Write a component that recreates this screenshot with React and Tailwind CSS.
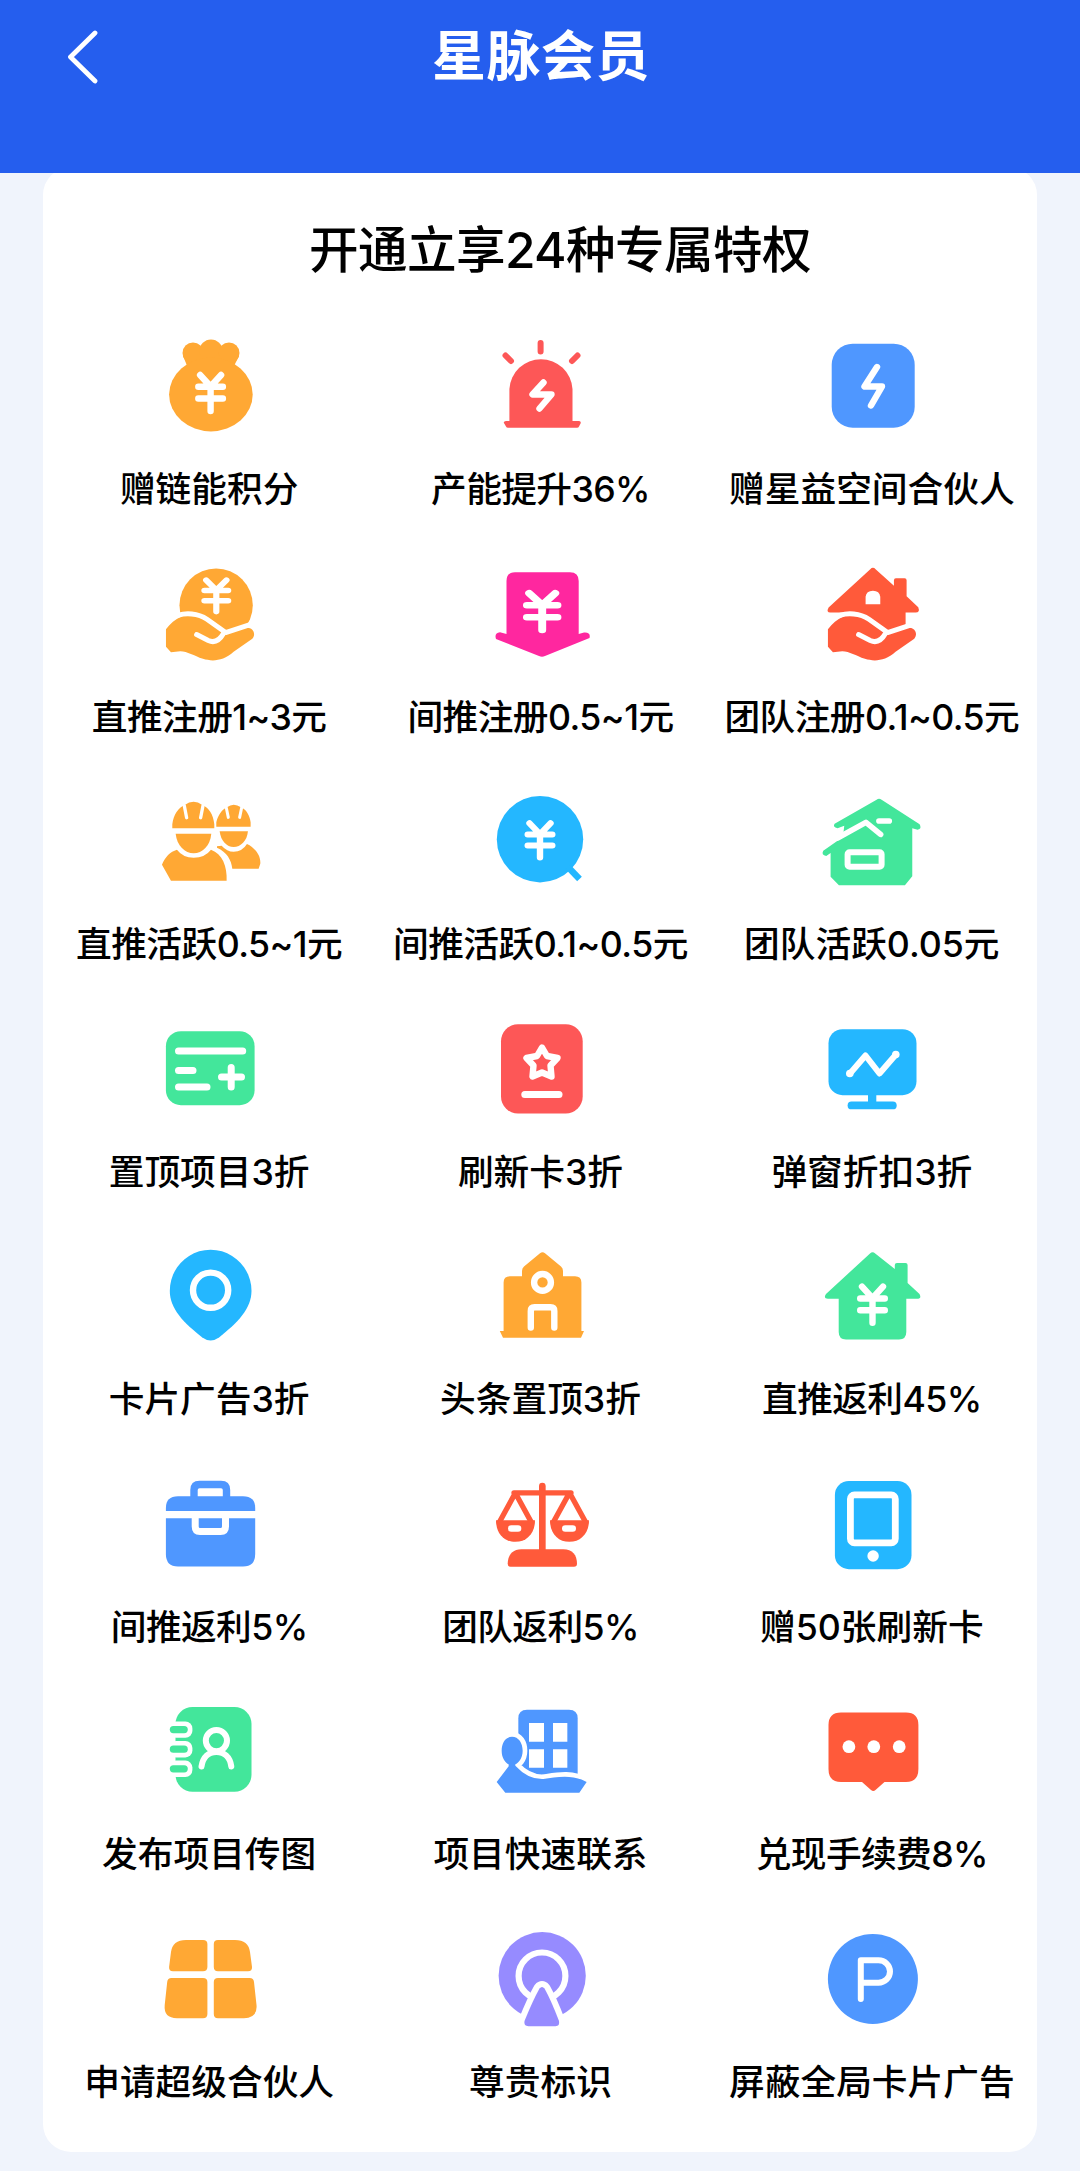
import { clsx } from 'clsx';

const ORANGE = '#ffa834';
const RED = '#fd5757';
const BLUE = '#4f97ff';
const PINK = '#ff279f';
const VERMILION = '#ff5a3a';
const GREEN = '#43e69b';
const SKY = '#24b7ff';
const PURPLE = '#968bff';

function Icon({ color, viewBox = '0 0 100 100', children }) {
  return (
    <svg width="100" height="100" viewBox={viewBox} fill={color} className="block overflow-visible">
      {children}
    </svg>
  );
}

// White rounded strokes cut into the filled shapes.
function Line({ d, w = 6.4 }) {
  return <path d={d} fill="none" stroke="#fff" strokeWidth={w} strokeLinecap="round" strokeLinejoin="round" />;
}

function Yen({ x, y, sx = 1, sy = 1 }) {
  return (
    <g transform={`translate(${x} ${y}) scale(${sx} ${sy})`}>
      <Line d="M-10.5 3L0 14.5L10.5 3M-12.3 14.8H12.3M-12.3 26.5H12.3M0 14.5V39" />
    </g>
  );
}

function Hand() {
  return (
    <>
      <path d="M47 207C60 190 75 178 92 170C110 160 145 158 168 176L228 217L288 203C304 200 320 218 306 236L250 275C218 304 185 304 158 296C130 286 112 274 90 273L62 276L47 260Z" />
      <Line w={15} d="M85 165C105 158 142 158 170 177L226 217L306 191" />
      <Line w={15} d="M139 223L174 241C192 249 208 240 220 219" />
    </>
  );
}

const MoneyBag = () => (
  <Icon color={ORANGE}>
    <circle cx="34" cy="17" r="10.5" />
    <circle cx="52" cy="15" r="11.5" />
    <circle cx="70" cy="17" r="10.5" />
    <path d="M24 20H80L74 32H29Z" />
    <ellipse cx="51.9" cy="58.5" rx="41.8" ry="36.9" />
    <Yen x={51.6} y={36} />
  </Icon>
);

const Siren = () => (
  <Icon color={RED}>
    <path d="M19.4 86V53A31.6 31.6 0 0 1 82.5 53V86Z" />
    <path d="M13.7 86.5Q14 85 16 85H89Q91 85 90.8 87L89 90.5Q88.5 91.7 87 91.7H18Q16.5 91.7 16 90.5Z" />
    <path d="M50.6 7V15.5M15.5 19.5L21 25M87.500 19.5L82 25" stroke={RED} strokeWidth="6" strokeLinecap="round" />
    <Line d="M53.5 46.500L42.500 58.5H61.5L49.5 72.5" />
  </Icon>
);

const Bolt = () => (
  <Icon color={BLUE}>
    <rect x="10.7" y="7.7" width="83" height="84" rx="21" />
    <Line d="M56 31L43.500 50.5H61L50 69.500" />
  </Icon>
);

const HandCoin = () => (
  <Icon color={ORANGE} viewBox="26.1 11.4 300 300">
    <circle cx="197.5" cy="135" r="110" />
    <Yen x={198} y={52} sx={2.9} sy={2.62} />
    <Hand />
  </Icon>
);

const PayDown = () => (
  <Icon color={PINK}>
    <path d="M16.5 50V17Q16.5 8.2 25 8.2H80Q88.7 8.2 88.7 17V70L94 68.5Q101 68 99.5 74L55 92Q52 93.5 49 92L6 75Q4 69 10 68.3L16.5 70Z" />
    <Yen x={52.2} y={26.2} sx={1.24} sy={1.02} />
  </Icon>
);

const HandHouse = () => (
  <Icon color={VERMILION} viewBox="34.2 11.4 300 300">
    <path d="M182 27Q190 19 198 27L253 77V60Q253 54 259 54H285Q291 54 291 60V108L326 141Q332 157 318 157H288V204L228 217L168 176L130 157H62Q49 157 57 142Z" />
    <path d="M168 132V110Q170 92 190 92T212 110V132Z" fill="#fff" />
    <g transform="translate(8 0)">
      <Hand />
    </g>
  </Icon>
);

const Workers = () => (
  <Icon color={ORANGE} viewBox="26.1 693.9 300 300">
    <path d="M66 806V794C70 764 84 744 103 736Q130 716 156 736C176 744 189 764 192 794V806Z" />
    <Line w={10} d="M102 738L109 774M158 738L151 774" />
    <path d="M76 822H183C180 858 156 881 130 881S80 858 76 822Z" />
    <path d="M35 915C44 892 60 876 80 870Q98 894 130 894Q164 894 182 870C216 882 231 920 229 963H62Z" />
    <path d="M198 801V788C203 766 215 750 230 743Q250 727 272 743C288 750 298 766 301 788V801Z" />
    <Line w={9} d="M228 744L234 773M274 744L268 773" />
    <path d="M208 815H293C290 845 271 862 250 862S212 845 208 815Z" />
    <path d="M200 860L214 858Q230 876 250 876Q276 876 290 853C314 864 332 888 330 912L325 927H246C243 900 230 878 200 864Z" />
  </Icon>
);

const Search = () => (
  <Icon color={SKY}>
    <circle cx="50" cy="48.2" r="43.2" />
    <path d="M78 76L89.5 88" stroke={SKY} strokeWidth="6.5" />
    <Yen x={50} y={29.4} sy={0.95} />
  </Icon>
);

const Villa = () => (
  <Icon color={GREEN} viewBox="34.2 693.9 300 300">
    <path d="M201 720Q208 715 216 720L330 794Q338 808 324 810L308 806V950L286 977H88L63 951V880L50 889Q34 886 41 873L100 832L104 798L84 806Q68 802 75 792Z" />
    <Line w={17} d="M84 835L169 788L213 824M208 784H239" />
    <rect x="114" y="878" width="102" height="43" rx="6" fill="none" stroke="#fff" strokeWidth="18" />
  </Icon>
);

const TopCard = () => (
  <Icon color={GREEN}>
    <rect x="6.9" y="12.2" width="88.7" height="74" rx="15" />
    <Line d="M19.5 32H83.7M19.5 51.5H34M19.5 68H48M62.500 58H82.5M72.2 48.5V68" w={7} />
  </Icon>
);

const StarCard = () => (
  <Icon color={RED}>
    <rect x="11" y="5.2" width="81.7" height="89.3" rx="17" />
    <Line d="M52 28.500L57 37L67.500 39L60.500 46.5L61.500 57.500L52 53.5L42.500 57.500L43.5 46.5L36.500 39L47 37Z" />
    <Line w={7} d="M34.8 75.5H69" />
  </Icon>
);

const Monitor = () => (
  <Icon color={SKY}>
    <rect x="7.5" y="10.2" width="88" height="66" rx="14" />
    <rect x="47" y="75" width="8.3" height="9" />
    <rect x="26.6" y="82.5" width="49.1" height="7.8" rx="3.9" />
    <Line w={6} d="M29 54.5L44.5 36.500L58.5 54.5L74.5 36" />
    <circle cx="28.8" cy="54.5" r="3.8" fill="#fff" />
    <circle cx="74.8" cy="35.500" r="3.8" fill="#fff" />
  </Icon>
);

const Pin = () => (
  <Icon color={SKY}>
    <path d="M51.6 3.7C74 3.7 92.5 22 92.5 45C92.5 63 78 77 60 91.5Q51.6 97.5 43.3 91.5C25 77 10.8 63 10.8 45C10.8 22 29 3.7 51.6 3.7Z" />
    <circle cx="51.6" cy="44.2" r="17.6" fill="none" stroke="#fff" strokeWidth="6.4" />
  </Icon>
);

const School = () => (
  <Icon color={ORANGE}>
    <path d="M50 7.3Q52.5 5 55 7.3L71 20.5Q73 22 73 25V30.3H85Q91.4 30.3 91.4 36.5V85H94L91 91.7H13L9.8 85H13.6V36.5Q13.6 30.3 20 30.3H32V25Q32 22 34 20.5Z" />
    <circle cx="52.5" cy="36.4" r="8.4" fill="none" stroke="#fff" strokeWidth="6.4" />
    <Line d="M40.8 81.500V65Q40.8 61.3 44.5 61.3H60.6Q64.3 61.3 64.3 65V81.500" />
  </Icon>
);

const YenHouse = () => (
  <Icon color={GREEN}>
    <path d="M49 7.5Q51.6 5 54.2 7.5L73.8 23V19Q73.8 17 76 17H84.5Q86.6 17 86.6 19V37L98.5 48Q101 52.8 96 52.8H85.3V86Q85.3 93.4 78 93.4H25Q17.7 93.4 17.7 86V52.8H7Q2 52.5 5 48Z" />
    <Yen x={51.5} y={37.7} />
  </Icon>
);

const Briefcase = () => (
  <Icon color={BLUE}>
    <path d="M35 24V16Q35 10.5 40.5 10.5H62Q67.5 10.5 67.5 16V24" fill="none" stroke={BLUE} strokeWidth="7.4" />
    <path d="M6.9 37V34Q6.9 22.2 19 22.2H84Q96.2 22.2 96.2 34V37Z" />
    <path d="M6.9 44.2H96.2V80Q96.2 92.5 84 92.5H19Q6.9 92.5 6.9 80Z" />
    <path d="M36.2 42V52.5Q36.2 57.5 41 57.5H61.5Q66.5 57.5 66.5 52.5V42" fill="none" stroke="#fff" strokeWidth="7" />
  </Icon>
);

const Scales = () => (
  <Icon color={VERMILION} viewBox="30 11.4 300 300">
    <path d="M187 48V245" stroke={VERMILION} strokeWidth="20" strokeLinecap="round" />
    <path
      d="M102 68H273M104 72L58 156M108 72L154 156M266 72L220 156M271 72L317 156"
      stroke={VERMILION}
      strokeWidth="16"
      strokeLinecap="round"
    />
    <path d="M48 150H165C165 190 140 215 106 215S48 190 48 150Z" />
    <path d="M210 150H327C327 190 302 215 268 215S210 190 210 150Z" />
    <Line w={20} d="M94 175H114M256 175H278" />
    <path d="M83 281C84 253 98 237 124 237H250C277 237 291 254 291 281Q291 290 282 290H92Q83 290 83 281Z" />
  </Icon>
);

const Tablet = () => (
  <Icon color={SKY}>
    <rect x="13.9" y="6.9" width="76.6" height="88.3" rx="14" />
    <rect x="29.4" y="20.9" width="44.9" height="47.9" rx="4" fill="none" stroke="#fff" strokeWidth="6.8" />
    <circle cx="52.1" cy="82" r="5.7" fill="#fff" />
  </Icon>
);

const Contacts = () => (
  <Icon color={GREEN}>
    <rect x="16.5" y="6" width="76" height="84.7" rx="17" />
    {[28.6, 48.2, 67.8].map((y) => (
      <g key={y}>
        <rect x="10" y={y - 8.2} width="23.4" height="16.4" rx="7" fill="#fff" />
        <rect x="10.8" y={y - 3.6} width="18" height="7.2" rx="3.6" />
      </g>
    ))}
    <circle cx="57.4" cy="39.6" r="10.6" fill="none" stroke="#fff" strokeWidth="6" />
    <Line w={6} d="M42.5 65.5C44 55.5 50 51 57.4 51S71 55.5 72.3 65.5" />
  </Icon>
);

const Estate = () => (
  <Icon color={BLUE} viewBox="30 693.9 300 300">
    <path d="M115 925V746Q115 720 141 720H267Q293 720 293 746V925Z" />
    <path d="M147 760H192V816H147ZM219 760H262V816H219ZM147 839H192V894H147ZM219 839H262V894H219Z" fill="#fff" />
    <g stroke="#fff" strokeWidth="28" strokeLinejoin="round" style={{ paintOrder: 'stroke' }}>
      <path d="M86 865H106V888Q145 930 190 928C230 922 275 912 320 937L298 969H76L50 937L86 890ZM96 801C116 801 128 820 128 843S114 886 96 886S65 866 65 843S76 801 96 801Z" />
    </g>
  </Icon>
);

const Message = () => (
  <Icon color={VERMILION}>
    <path d="M20 11.4H85Q97.4 11.4 97.4 24V68Q97.4 81 85 81H63.5L54.5 89Q52.3 91 50 89L41 81H20Q7.5 81 7.5 68V24Q7.5 11.4 20 11.4Z" />
    <circle cx="27.9" cy="45.7" r="6.4" fill="#fff" />
    <circle cx="52.8" cy="45.7" r="6.4" fill="#fff" />
    <circle cx="78.2" cy="45.7" r="6.4" fill="#fff" />
  </Icon>
);

const Grid4 = () => (
  <Icon color={ORANGE}>
    <path d="M27 10.9H44Q48.4 10.9 48.4 15V38Q48.4 42.2 44 42.2H14Q9.8 42.2 10.1 38L12 23Q13.5 10.9 27 10.9Z" />
    <path d="M76 10.9H59Q54.8 10.9 54.8 15V38Q54.8 42.2 59 42.2H89Q93.3 42.2 93 38L91 23Q89.5 10.9 76 10.9Z" />
    <path d="M12.5 48.9H44Q48.4 48.9 48.4 53V85Q48.4 89.2 44 89.2H18Q4.5 89.2 5.7 76L8.2 53Q8.6 48.9 12.5 48.9Z" />
    <path d="M90.7 48.9H59Q54.8 48.9 54.8 53V85Q54.8 89.2 59 89.2H85Q98.7 89.2 97.5 76L95 53Q94.6 48.9 90.7 48.9Z" />
  </Icon>
);

const Badge = () => (
  <Icon color={PURPLE}>
    <circle cx="52.2" cy="46.7" r="43.6" />
    <circle cx="52" cy="46.9" r="23.4" fill="none" stroke="#fff" strokeWidth="6.2" />
    <path
      d="M49.5 59.5Q52 56.5 54.5 59.5Q61 71 69 92Q70 97.2 65.5 97.2H38.5Q33.5 97.2 34.5 92Q43 71 49.5 59.5Z"
      stroke="#fff"
      strokeWidth="12"
      strokeLinejoin="round"
      style={{ paintOrder: 'stroke' }}
    />
  </Icon>
);

const Parking = () => (
  <Icon color={BLUE}>
    <circle cx="51.9" cy="49.9" r="45" />
    <Line w={6} d="M39.8 70V31.3H57.5A11.5 11.2 0 0 1 57.5 53.7H40" />
  </Icon>
);

const PRIVILEGES = [
  { name: '赠链能积分', icon: MoneyBag },
  { name: '产能提升36%', icon: Siren, spacing: 'percent' },
  { name: '赠星益空间合伙人', icon: Bolt },
  { name: '直推注册1~3元', icon: HandCoin, spacing: 'range' },
  { name: '间推注册0.5~1元', icon: PayDown, spacing: 'range' },
  { name: '团队注册0.1~0.5元', icon: HandHouse, spacing: 'range' },
  { name: '直推活跃0.5~1元', icon: Workers, spacing: 'range' },
  { name: '间推活跃0.1~0.5元', icon: Search, spacing: 'range' },
  { name: '团队活跃0.05元', icon: Villa },
  { name: '置顶项目3折', icon: TopCard },
  { name: '刷新卡3折', icon: StarCard },
  { name: '弹窗折扣3折', icon: Monitor },
  { name: '卡片广告3折', icon: Pin },
  { name: '头条置顶3折', icon: School },
  { name: '直推返利45%', icon: YenHouse, spacing: 'percent' },
  { name: '间推返利5%', icon: Briefcase, spacing: 'percent' },
  { name: '团队返利5%', icon: Scales, spacing: 'percent' },
  { name: '赠50张刷新卡', icon: Tablet },
  { name: '发布项目传图', icon: Contacts },
  { name: '项目快速联系', icon: Estate },
  { name: '兑现手续费8%', icon: Message, spacing: 'percent' },
  { name: '申请超级合伙人', icon: Grid4 },
  { name: '尊贵标识', icon: Badge },
  { name: '屏蔽全局卡片广告', icon: Parking },
];

function Privilege({ name, icon: Glyph, spacing }) {
  return (
    <li className="flex flex-col items-center">
      <Glyph />
      <span
        className={clsx(
          'mt-[28px] ml-px text-[35.7px] leading-[50px] font-medium whitespace-nowrap',
          spacing === 'range' && 'tracking-[-0.55px]',
          spacing === 'percent' && 'tracking-[-0.6px]',
        )}
      >
        {name}
      </span>
    </li>
  );
}

export default function App() {
  return (
    <div className="w-[1080px] h-[2171px] overflow-hidden bg-[#f0f4fc] text-black font-[Inter,'Noto_Sans_CJK_SC',sans-serif]">
      <header className="relative z-10 h-[173px] bg-[#255eee] grid grid-cols-[1fr_auto_1fr] items-start text-white">
        <button type="button" aria-label="返回" className="ml-[66px] mt-[29px] w-8">
          <svg width="32" height="56" viewBox="0 0 32 56" fill="none">
            <path d="M29 4L4.5 28L29 52" stroke="#fff" strokeWidth="4.8" strokeLinecap="round" strokeLinejoin="round" />
          </svg>
        </button>
        <h1 className="mt-[22px] ml-0.5 text-[54px] leading-[70px] font-bold tracking-[0.5px]">星脉会员</h1>
      </header>

      <main className="-mt-[6px] mx-[43px] h-[1985px] rounded-[28px] bg-white pt-[58px]">
        <h2 className="pl-10 text-center text-[49.6px] leading-[50px] font-medium tracking-[-0.6px]">
          开通立享24种专属特权
        </h2>
        <ul className="mt-[61px] grid grid-cols-3 auto-rows-[227.5px]">
          {PRIVILEGES.map((item) => (
            <Privilege key={item.name} {...item} />
          ))}
        </ul>
      </main>
    </div>
  );
}
